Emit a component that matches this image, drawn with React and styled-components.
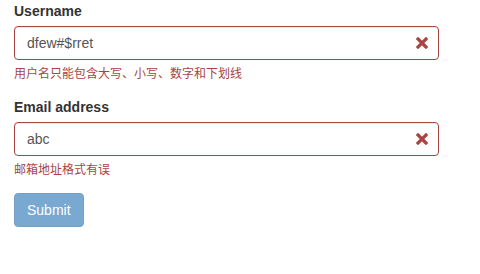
import React from "react";
import styled, { createGlobalStyle } from "styled-components";

const GlobalStyle = createGlobalStyle`
  * { box-sizing: border-box; }
  body {
    margin: 0;
    background: #fff;
    font-family: "Liberation Sans", Arial, "Noto Sans CJK SC", sans-serif;
    font-size: 14px;
    line-height: 1.42857143;
    color: #333;
  }
`;

const Form = styled.form`
  width: 453px;
  padding: 1px 14px 0 14px;
`;

const Group = styled.div`
  margin-bottom: 15px;
`;

const Label = styled.label`
  display: block;
  margin-bottom: 5px;
  font-weight: bold;
  color: #333;
`;

const Field = styled.div`
  position: relative;
`;

const Input = styled.input`
  display: block;
  width: 100%;
  height: 34px;
  padding: 6px 42.5px 6px 12px;
  font-family: inherit;
  font-size: 14px;
  line-height: 1.42857143;
  color: #555;
  background: #fff;
  border: 1px solid ${(p) => (p.$error ? "#a94442" : "#ccc")};
  border-radius: 4px;
  box-shadow: inset 0 1px 1px rgba(0, 0, 0, 0.075);
  outline: none;
`;

const Feedback = styled.span`
  position: absolute;
  top: 0;
  right: 0;
  width: 34px;
  height: 34px;
  display: flex;
  align-items: center;
  justify-content: center;
  pointer-events: none;
`;

const Help = styled.span`
  display: block;
  margin-top: 5px;
  margin-bottom: 10px;
  padding-top: 1px;
  font-size: 12px;
  line-height: 16.14px;
  color: #a94442;
  font-family: "Liberation Sans", "Noto Sans CJK SC", sans-serif;
`;

const Button = styled.button`
  display: inline-block;
  padding: 6px 12px;
  height: 34px;
  font-family: inherit;
  font-size: 14px;
  line-height: 1.42857143;
  color: #fff;
  background-color: #337ab7;
  border: 1px solid #2e6da4;
  border-radius: 4px;
  opacity: 0.65;
  cursor: not-allowed;
`;

const RemoveIcon = () => (
  <svg width="12" height="12" viewBox="0 0 12 12">
    <path
      d="M2 2 L10 10 M10 2 L2 10"
      stroke="#a94442"
      strokeWidth="3.2"
      strokeLinecap="square"
    />
  </svg>
);

const ErrorField = ({ label, value, help }) => (
  <Group>
    <Label>{label}</Label>
    <Field>
      <Input $error defaultValue={value} />
      <Feedback>
        <RemoveIcon />
      </Feedback>
    </Field>
    <Help>{help}</Help>
  </Group>
);

export default function App() {
  return (
    <>
      <GlobalStyle />
      <Form onSubmit={(e) => e.preventDefault()}>
        <ErrorField
          label="Username"
          value="dfew#$rret"
          help="用户名只能包含大写、小写、数字和下划线"
        />
        <ErrorField label="Email address" value="abc" help="邮箱地址格式有误" />
        <Button type="submit" disabled>
          Submit
        </Button>
      </Form>
    </>
  );
}
